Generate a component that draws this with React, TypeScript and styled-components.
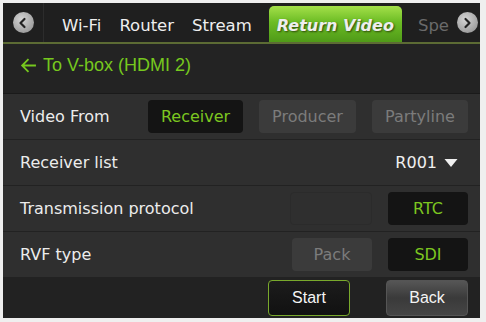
import React from "react";
import styled, { createGlobalStyle } from "styled-components";

const GlobalStyle = createGlobalStyle`
  html, body {
    margin: 0;
    padding: 0;
    background: #efefef;
  }
  body {
    font-family: "DejaVu Sans", Verdana, sans-serif;
  }
`;

const Screen = styled.div`
  margin: 3px 0 0 3px;
  width: 477px;
  height: 315px;
  background: #232323;
  display: flex;
  flex-direction: column;
  overflow: hidden;
`;

const TabBar = styled.div`
  height: 39px;
  display: flex;
  align-items: flex-end;
  border-bottom: 2px solid #5c6b34;
  background: #1f1f1f;
`;

const NavButton = styled.div<{ side: "left" | "right" }>`
  width: ${(p) => (p.side === "left" ? "40px" : "26px")};
  height: 39px;
  display: flex;
  align-items: center;
  justify-content: center;
  flex-shrink: 0;
  border-right: ${(p) => (p.side === "left" ? "1px solid #2c2c2c" : "none")};
`;

const NavCircle = styled.div`
  width: 21px;
  height: 21px;
  border-radius: 50%;
  background: radial-gradient(circle at 40% 35%, #d4d4d4, #8a8a8a);
  display: flex;
  align-items: center;
  justify-content: center;
`;

const Tabs = styled.div`
  flex: 1;
  display: flex;
  align-items: flex-end;
  overflow: hidden;
  padding-left: 9px;
`;

const Tab = styled.div<{ active?: boolean; dim?: boolean }>`
  box-sizing: border-box;
  height: ${(p) => (p.active ? "36px" : "39px")};
  padding: ${(p) => (p.active ? "3px 8px 0" : "5px 9px 0")};
  margin: 0 ${(p) => (p.active ? "7px 0 8px" : "0")};
  display: flex;
  align-items: center;
  white-space: nowrap;
  font-size: ${(p) => (p.active ? "16px" : "16.5px")};
  color: ${(p) => (p.dim ? "#6a6a6a" : "#eeeeee")};
  font-weight: ${(p) => (p.active ? "bold" : "normal")};
  font-style: ${(p) => (p.active ? "italic" : "normal")};
  border-radius: ${(p) => (p.active ? "5px 5px 0 0" : "0")};
  background: ${(p) =>
    p.active ? "linear-gradient(#a4e04a 0%, #6cbc24 45%, #4f9a18 100%)" : "none"};
  text-shadow: ${(p) => (p.active ? "1px 1px 2px #2c4a0a" : "none")};
  flex-shrink: 0;
`;

const Header = styled.div`
  height: 50px;
  box-sizing: border-box;
  display: flex;
  align-items: center;
  padding: 0 0 6px 17px;
  gap: 6px;
  color: #76c81e;
  font-family: "Liberation Sans", Arial, sans-serif;
  font-size: 18px;
  border-bottom: 1px solid #1a1a1a;
`;

const Row = styled.div`
  height: 45px;
  display: flex;
  align-items: center;
  padding: 0 12px 0 17px;
  background: #2f2f2f;
  border-bottom: 1px solid #222;
  color: #ececec;
  font-size: 16px;
`;

const Label = styled.div`
  flex: 1;
`;

const Options = styled.div`
  display: flex;
  gap: 16px;
`;

type Variant = "on" | "off" | "ghost";

const OptionButton = styled.div<{ variant: Variant; w: number }>`
  width: ${(p) => p.w}px;
  height: 31px;
  border-radius: 4px;
  display: flex;
  align-items: center;
  justify-content: center;
  font-size: 16px;
  background: ${(p) =>
    p.variant === "on" ? "#141414" : p.variant === "off" ? "#3b3b3b" : "#2f2f2f"};
  color: ${(p) =>
    p.variant === "on" ? "#7cc620" : p.variant === "off" ? "#7c7c7c" : "#2f2f2f"};
  border: 1px solid ${(p) => (p.variant === "ghost" ? "#2b2b2b" : "transparent")};
`;

const Dropdown = styled.div`
  display: flex;
  align-items: center;
  gap: 7px;
  padding-right: 10px;
  font-size: 16px;
  color: #f0f0f0;
`;

const Footer = styled.div`
  flex: 1;
  display: flex;
  justify-content: flex-end;
  align-items: center;
  gap: 36px;
  padding-right: 12px;
  background: #222;
`;

const ActionButton = styled.div<{ primary?: boolean }>`
  width: 80px;
  height: 34px;
  border-radius: 4px;
  display: flex;
  align-items: center;
  justify-content: center;
  font-family: "Liberation Sans", Arial, sans-serif;
  font-size: 16px;
  color: #f4f4f4;
  border: 1px solid ${(p) => (p.primary ? "#79a92c" : "#555")};
  background: ${(p) =>
    p.primary
      ? "linear-gradient(#1c1c1c, #111)"
      : "linear-gradient(#565656, #3a3a3a 50%, #454545)"};
`;

const ChevronLeft = () => (
  <svg width="12" height="12" viewBox="0 0 12 12">
    <path d="M7.5 2 L3.5 6 L7.5 10" stroke="#222" strokeWidth="2.2" fill="none" strokeLinecap="round" strokeLinejoin="round" />
  </svg>
);

const ChevronRight = () => (
  <svg width="12" height="12" viewBox="0 0 12 12">
    <path d="M4.5 2 L8.5 6 L4.5 10" stroke="#222" strokeWidth="2.2" fill="none" strokeLinecap="round" strokeLinejoin="round" />
  </svg>
);

const ArrowLeft = () => (
  <svg width="17" height="17" viewBox="0 0 16 16">
    <path d="M15 8 H2 M8 2 L2 8 L8 14" stroke="#76c81e" strokeWidth="1.7" fill="none" />
  </svg>
);

const Caret = () => (
  <svg width="14" height="10" viewBox="0 0 14 10">
    <path d="M0.5 1 H13.5 L7 9 Z" fill="#f0f0f0" />
  </svg>
);

const App = () => (
  <>
    <GlobalStyle />
    <Screen>
      <TabBar>
        <NavButton side="left">
          <NavCircle>
            <ChevronLeft />
          </NavCircle>
        </NavButton>
        <Tabs>
          <Tab>Wi-Fi</Tab>
          <Tab>Router</Tab>
          <Tab>Stream</Tab>
          <Tab active>Return Video</Tab>
          <Tab dim>Spe</Tab>
        </Tabs>
        <NavButton side="right">
          <NavCircle>
            <ChevronRight />
          </NavCircle>
        </NavButton>
      </TabBar>
      <Header>
        <ArrowLeft />
        To V-box (HDMI 2)
      </Header>
      <Row>
        <Label>Video From</Label>
        <Options>
          <OptionButton variant="on" w={93}>Receiver</OptionButton>
          <OptionButton variant="off" w={95}>Producer</OptionButton>
          <OptionButton variant="off" w={94}>Partyline</OptionButton>
        </Options>
      </Row>
      <Row>
        <Label>Receiver list</Label>
        <Dropdown>
          R001
          <Caret />
        </Dropdown>
      </Row>
      <Row>
        <Label>Transmission protocol</Label>
        <Options>
          <OptionButton variant="ghost" w={80}>Pack</OptionButton>
          <OptionButton variant="on" w={78}>RTC</OptionButton>
        </Options>
      </Row>
      <Row>
        <Label>RVF type</Label>
        <Options>
          <OptionButton variant="off" w={78}>Pack</OptionButton>
          <OptionButton variant="on" w={78}>SDI</OptionButton>
        </Options>
      </Row>
      <Footer>
        <ActionButton primary>Start</ActionButton>
        <ActionButton>Back</ActionButton>
      </Footer>
    </Screen>
  </>
);

export default App;
